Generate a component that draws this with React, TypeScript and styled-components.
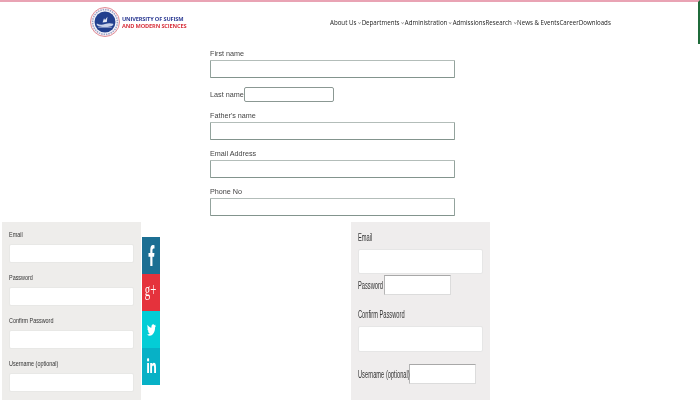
import React from 'react';
import styled, { createGlobalStyle } from 'styled-components';
import { FaFacebookF, FaLinkedinIn, FaTwitter } from 'react-icons/fa';

const GlobalStyle = createGlobalStyle`
  html, body {
    margin: 0;
    padding: 0;
    background: #fff;
    overflow: hidden;
    font-family: "Liberation Sans", Arial, sans-serif;
  }
`;

const Page = styled.div`
  width: 700px;
  height: 400px;
  overflow: hidden;
  filter: blur(0.35px);
`;

const Header = styled.header`
  box-sizing: border-box;
  width: 700px;
  height: 44px;
  border-top: 2px solid #e9a3b4;
  border-right: 2px solid #1f6b3a;
  padding: 0 0 2px 90px;
  display: flex;
  align-items: center;
`;

const Brand = styled.div`
  display: flex;
  align-items: center;
  gap: 1px;
  width: 240px;
`;

const BrandText = styled.div`
  display: flex;
  flex-direction: column;
  margin: 2px 0 0 1px;
  font-family: "Open Sans", sans-serif;
  font-size: 5.65px;
  font-weight: 700;
  line-height: 7.5px;
  letter-spacing: -0.15px;
`;

const BrandLine = styled.span<{ $color: string }>`
  color: ${(p) => p.$color};
  white-space: nowrap;
`;

const Nav = styled.nav`
  display: flex;
  font-family: "Open Sans", sans-serif;
  font-size: 7px;
  color: #222;
  white-space: nowrap;
  transform: scaleX(0.88);
  transform-origin: left center;
`;

const NavItem = styled.span<{ $caret?: boolean }>`
  display: flex;
  align-items: center;

  &::after {
    content: "";
    display: ${(p) => (p.$caret ? 'block' : 'none')};
    width: 2px;
    height: 2px;
    margin: 0 1px 0 2px;
    border-right: 1px solid #999;
    border-bottom: 1px solid #999;
    transform: rotate(45deg) scale(0.8);
  }
`;

const NameForm = styled.form`
  box-sizing: border-box;
  width: 245px;
  height: 178px;
  margin-left: 210px;
  padding-top: 5px;
`;

const FieldLabel = styled.label`
  display: block;
  font-size: 7.6px;
  line-height: 9px;
  color: #444;
  margin-bottom: 2px;
  white-space: nowrap;
  transform: scaleX(0.95);
  transform-origin: left center;
`;

const WideInput = styled.input`
  display: block;
  box-sizing: border-box;
  width: 245px;
  height: 18px;
  margin: 0 0 9px;
  border: 1px solid #93a39d;
  border-top-color: #b3bdb9;
  border-bottom-color: #83948d;
  border-radius: 1px;
  background: #fff;
`;

const InlineRow = styled.div`
  display: flex;
  align-items: center;
  gap: 1px;
  height: 15px;
  margin-bottom: 9px;
`;

const InlineLabel = styled.label`
  font-size: 7.6px;
  color: #444;
  white-space: nowrap;
  width: 33px;
  transform: scaleX(0.95);
  transform-origin: left center;
`;

const SmallInput = styled.input`
  box-sizing: border-box;
  width: 90px;
  height: 15px;
  border: 1px solid #8b9893;
  border-radius: 2px;
  background: #fff;
`;

const BottomRow = styled.div`
  display: flex;
  align-items: flex-start;
  padding-left: 2px;
`;

const SignupPanel = styled.div`
  box-sizing: border-box;
  width: 139px;
  height: 178px;
  background: #eeedeb;
  padding: 8px 7px 0 7px;
`;

const PanelLabel = styled.label`
  display: block;
  font-size: 8px;
  line-height: 9px;
  color: #333;
  white-space: nowrap;
  margin-bottom: 5px;
  transform: scaleX(0.68);
  transform-origin: left center;
`;

const PanelInput = styled.input`
  display: block;
  box-sizing: border-box;
  width: 125px;
  height: 19px;
  margin: 0 0 10px;
  border: 1px solid #e8e8e6;
  border-radius: 2px;
  background: #fff;
`;

const SocialBar = styled.div`
  width: 18px;
  margin: 15px 0 0 1px;
  display: flex;
  flex-direction: column;
`;

const SocialLink = styled.a<{ $bg: string }>`
  height: 37px;
  background: ${(p) => p.$bg};
  color: #fff;
  display: flex;
  align-items: center;
  justify-content: center;
`;

const PlusGlyph = styled.span`
  font-family: "Liberation Serif", serif;
  font-size: 18px;
  line-height: 1;
  white-space: nowrap;
  margin-top: -5px;
  transform: scaleX(0.6);
`;

const AltPanel = styled.div`
  box-sizing: border-box;
  width: 139px;
  height: 178px;
  margin-left: 191px;
  background: #efeded;
  padding: 11px 7px 0 7px;
`;

const AltLabel = styled.label`
  display: block;
  font-size: 10px;
  line-height: 10px;
  color: #333;
  white-space: nowrap;
  margin-bottom: 6px;
  transform: scaleX(0.57);
  transform-origin: left center;
`;

const AltInput = styled.input<{ $height: number }>`
  display: block;
  box-sizing: border-box;
  width: 125px;
  height: ${(p) => p.$height}px;
  margin: 0;
  border: 1px solid #e6e6e6;
  border-radius: 2px;
  background: #fff;
`;

const AltInlineRow = styled.div<{ $top: number; $after: number }>`
  display: flex;
  align-items: center;
  height: 20px;
  margin: ${(p) => p.$top}px 0 ${(p) => p.$after}px;
`;

const AltInlineLabel = styled.label<{ $width: number }>`
  width: ${(p) => p.$width}px;
  font-size: 10px;
  color: #333;
  white-space: nowrap;
  transform: scaleX(0.57);
  transform-origin: left center;
`;

const AltInlineInput = styled.input`
  box-sizing: border-box;
  width: 67px;
  height: 20px;
  border: 1px solid #dcdcdc;
  border-top-color: #a8a8a8;
  border-left-color: #b5b5b5;
  background: #fff;
`;

const Seal = () => (
  <svg width="30" height="30" viewBox="0 0 31 31" aria-hidden="true">
    <circle cx="15.5" cy="15.5" r="15" fill="#fbeef0" stroke="#e08a94" strokeWidth="1" />
    <circle cx="15.5" cy="15.5" r="12.8" fill="#f4f4fa" stroke="#9aa3c8" strokeWidth="1.6" strokeDasharray="1.5 1" />
    <circle cx="15.5" cy="15.5" r="10.8" fill="#23408f" />
    <path d="M7 17c3 1.600 5.500 1.600 8.500.6s5.500-1 8.500-.2v1.200c-2.800 2.800-14.200 2.800-17 0z" fill="#c9d2ea" />
    <path d="M13 16l1.500-4.500 1 2 2.500-3.500-.6 5.500z" fill="#e4e8f4" />
    <path d="M8.500 21h14" stroke="#aeb9db" strokeWidth=".8" />
  </svg>
);

export default function App() {
  return (
    <Page>
      <GlobalStyle />
      <Header>
        <Brand>
          <Seal />
          <BrandText>
            <BrandLine $color="#2f3d94">UNIVERSITY OF SUFISM</BrandLine>
            <BrandLine $color="#d8343f">AND MODERN SCIENCES</BrandLine>
          </BrandText>
        </Brand>
        <Nav>
          <NavItem $caret>About Us</NavItem>
          <NavItem $caret>Departments</NavItem>
          <NavItem $caret>Administration</NavItem>
          <NavItem>Admissions</NavItem>
          <NavItem $caret>Research</NavItem>
          <NavItem>News &amp; Events</NavItem>
          <NavItem>Career</NavItem>
          <NavItem>Downloads</NavItem>
        </Nav>
      </Header>

      <NameForm>
        <FieldLabel>First name</FieldLabel>
        <WideInput />
        <InlineRow>
          <InlineLabel>Last name</InlineLabel>
          <SmallInput />
        </InlineRow>
        <FieldLabel>Father's name</FieldLabel>
        <WideInput />
        <FieldLabel>Email Address</FieldLabel>
        <WideInput />
        <FieldLabel>Phone No</FieldLabel>
        <WideInput />
      </NameForm>

      <BottomRow>
        <SignupPanel>
          <PanelLabel>Email</PanelLabel>
          <PanelInput />
          <PanelLabel>Password</PanelLabel>
          <PanelInput />
          <PanelLabel>Confirm Password</PanelLabel>
          <PanelInput />
          <PanelLabel>Username (optional)</PanelLabel>
          <PanelInput />
        </SignupPanel>
        <SocialBar>
          <SocialLink $bg="#1c6f93">
            <FaFacebookF style={{ width: 7, height: 21 }} preserveAspectRatio="none" />
          </SocialLink>
          <SocialLink $bg="#e5323c">
            <PlusGlyph>g+</PlusGlyph>
          </SocialLink>
          <SocialLink $bg="#04cdd6">
            <FaTwitter style={{ width: 9, height: 14 }} preserveAspectRatio="none" />
          </SocialLink>
          <SocialLink $bg="#07b1c6">
            <FaLinkedinIn style={{ width: 9, height: 17 }} preserveAspectRatio="none" />
          </SocialLink>
        </SocialBar>
        <AltPanel>
          <AltLabel>Email</AltLabel>
          <AltInput $height={25} />
          <AltInlineRow $top={1} $after={15}>
            <AltInlineLabel $width={26}>Password</AltInlineLabel>
            <AltInlineInput />
          </AltInlineRow>
          <AltLabel>Confirm Password</AltLabel>
          <AltInput $height={26} />
          <AltInlineRow $top={12} $after={0}>
            <AltInlineLabel $width={51}>Username (optional)</AltInlineLabel>
            <AltInlineInput />
          </AltInlineRow>
        </AltPanel>
      </BottomRow>
    </Page>
  );
}
